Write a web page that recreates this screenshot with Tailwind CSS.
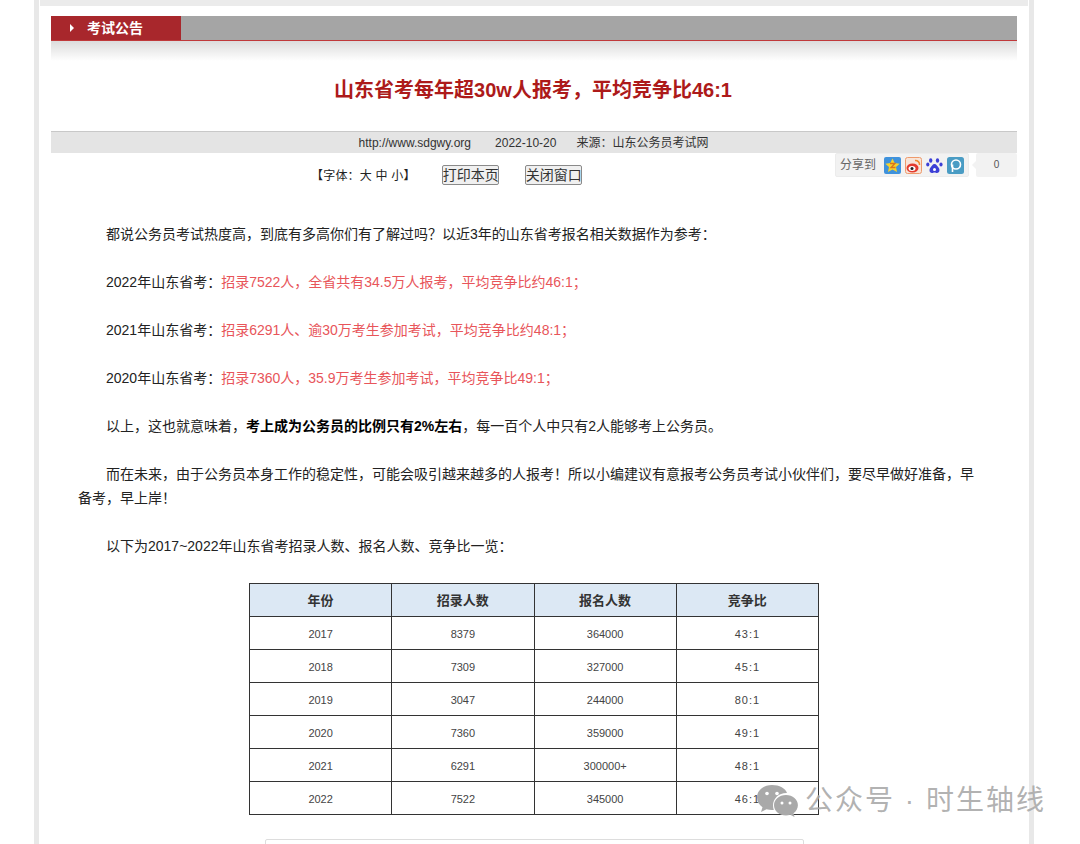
<!DOCTYPE html>
<html lang="zh-CN">
<head>
<meta charset="UTF-8">
<title>山东省考每年超30w人报考，平均竞争比46:1</title>
<script src="https://cdn.jsdelivr.net/npm/@tailwindcss/browser@4"></script>
</head>
<body class="bg-white h-[844px] overflow-hidden relative font-['Liberation_Sans','Noto_Sans_CJK_SC',sans-serif]">
<!-- page frame -->
<div class="ml-[34px] w-[1000px] h-[844px] border-x-[5px] border-[#e8e8e8] px-[1px] overflow-hidden">
  <div class="h-[6px] bg-[#ebebeb]"></div>
  <div class="px-[11px] pt-[10px]">
    <!-- section header -->
    <div class="flex h-[25px] bg-[#a5a5a5] border-b border-[#c0393b]">
      <div class="w-[130px] bg-[#a8272c] flex items-center pl-[19px] text-white text-[14px] font-bold">
        <span class="w-0 h-0 border-y-[4px] border-y-transparent border-l-[4px] border-l-white mr-[13px]"></span>
        考试公告
      </div>
    </div>
    <div class="h-[20px] bg-gradient-to-b from-[#dcdcdc] to-white"></div>
    <h1 class="h-[70px] pt-[9px] pr-[2px] text-center text-[#ad1a1a] text-[20px] leading-[40px] font-bold">山东省考每年超30w人报考，平均竞争比46:1</h1>
    <!-- source bar -->
    <div class="h-[22px] bg-[#e4e4e4] border-t border-[#c8c8c8] flex items-center justify-center text-[12px] text-[#333] pr-[1px]">
      <span>http://www.sdgwy.org</span>
      <span class="ml-[24px]">2022-10-20</span>
      <span class="ml-[20px]">来源：山东公务员考试网</span>
    </div>
    <!-- tools row -->
    <div class="relative h-[36px] flex items-center text-[12px] text-[#222]">
      <span class="ml-[260px] mt-[10px] tracking-[0.2px]">【字体：大 中 小】</span>
      <button class="ml-[26px] mt-[7px] w-[57px] h-[20px] border border-[#8a8a8a] rounded-[2px] bg-[#f0f0f0] text-[14px] leading-[18px] text-[#333] whitespace-nowrap overflow-hidden">打印本页</button>
      <button class="ml-[26px] mt-[7px] w-[57px] h-[20px] border border-[#8a8a8a] rounded-[2px] bg-[#f0f0f0] text-[14px] leading-[18px] text-[#333] whitespace-nowrap overflow-hidden">关闭窗口</button>
      <!-- share widget -->
      <div class="absolute right-0 top-0 flex items-start">
        <div class="w-[134px] h-[24px] bg-[#f2f2f2] border border-[#ececec] rounded-[2px] flex items-center pl-[4px] text-[12px] text-[#666]">
          <span class="mr-[8px]">分享到</span>
          <svg class="mr-[4px]" width="17" height="17" viewBox="0 0 17 17"><rect width="17" height="17" rx="2" fill="#3f92dc"/><path d="M8.5 1.5l2.2 4.6 5 .6-3.7 3.4 1 5-4.5-2.5L4 15.100l1-5L1.300 6.700l5-.6z" fill="#f6d22c"/><path d="M6 6.500h5L7 10.500h4.500" stroke="#d9731c" stroke-width="1.300" fill="none"/></svg>
          <svg class="mr-[4px]" width="17" height="17" viewBox="0 0 17 17"><rect x=".5" y=".5" width="16" height="16" rx="2" fill="#f8e4d8" stroke="#ee9a6c"/><ellipse cx="7.500" cy="11" rx="6" ry="4.500" fill="#e33b2e"/><ellipse cx="7" cy="11.500" rx="3.500" ry="2.500" fill="#fff"/><circle cx="7" cy="11.500" r="1.500" fill="#222"/><path d="M10 3.500a4 4 0 0 1 4.500 4.500" stroke="#ef8a2c" stroke-width="1.500" fill="none"/></svg>
          <svg class="mr-[4px]" width="17" height="17" viewBox="0 0 17 17" fill="#3c3fd6"><ellipse cx="4.700" cy="3.500" rx="1.700" ry="2.300"/><ellipse cx="11.500" cy="3.500" rx="1.700" ry="2.300"/><ellipse cx="1.800" cy="7.500" rx="1.600" ry="2"/><ellipse cx="15" cy="7.500" rx="1.600" ry="2"/><path d="M8.500 7c-2 0-2.500 2-4 3.500S3 16 6 16c1 0 1.500-.5 2.500-.5s1.500.5 2.500.5c3 0 3-4 1.500-5.500S10.500 7 8.500 7z"/><circle cx="8.500" cy="12.500" r="1.500" fill="#fff"/></svg>
          <svg width="17" height="17" viewBox="0 0 17 17"><rect width="17" height="17" rx="2.500" fill="#4a9cc4"/><circle cx="9" cy="7.500" r="4.500" fill="none" stroke="#fff" stroke-width="1.600"/><path d="M5.500 7.500V15" stroke="#fff" stroke-width="1.600"/></svg>
        </div>
        <div class="ml-[7px] relative w-[41px] h-[24px] bg-[#f2f2f2] rounded-[2px] text-center text-[10px] leading-[24px] text-[#555]">
          <span class="absolute -left-[4px] top-[8px] w-0 h-0 border-y-[4px] border-y-transparent border-r-[4px] border-r-[#f2f2f2]"></span>
          0
        </div>
      </div>
    </div>
    <!-- article -->
    <div class="mt-[33px] pl-[27px] pr-[38px] text-[14px] leading-[24px] text-[#222] flex flex-col gap-[24px]">
      <p class="indent-[28px]">都说公务员考试热度高，到底有多高你们有了解过吗？以近3年的山东省考报名相关数据作为参考：</p>
      <p class="indent-[28px]">2022年山东省考：<span class="text-[#e8555a]">招录7522人，全省共有34.5万人报考，平均竞争比约46:1；</span></p>
      <p class="indent-[28px]">2021年山东省考：<span class="text-[#e8555a]">招录6291人、逾30万考生参加考试，平均竞争比约48:1；</span></p>
      <p class="indent-[28px]">2020年山东省考：<span class="text-[#e8555a]">招录7360人，35.9万考生参加考试，平均竞争比49:1；</span></p>
      <p class="indent-[28px]">以上，这也就意味着，<b class="text-black">考上成为公务员的比例只有2%左右</b>，每一百个人中只有2人能够考上公务员。</p>
      <p class="indent-[28px]">而在未来，由于公务员本身工作的稳定性，可能会吸引越来越多的人报考！所以小编建议有意报考公务员考试小伙伴们，要尽早做好准备，早备考，早上岸！</p>
      <p class="indent-[28px]">以下为2017~2022年山东省考招录人数、报名人数、竞争比一览：</p>
    </div>
    <!-- data table -->
    <table class="mt-[25px] ml-[198px] w-[570px] table-fixed border-collapse border border-[#333] text-center text-[11px] text-[#444]">
      <thead>
        <tr class="h-[33px] bg-[#dce8f4] text-[13px] font-bold text-[#333]">
          <th class="border border-[#333] pt-[2px]">年份</th><th class="border border-[#333] pt-[2px]">招录人数</th><th class="border border-[#333] pt-[2px]">报名人数</th><th class="border border-[#333] pt-[2px]">竞争比</th>
        </tr>
      </thead>
      <tbody class="[&_td]:border [&_td]:border-[#333] [&_td]:pt-[2px]">
        <tr class="h-[33px]"><td>2017</td><td>8379</td><td>364000</td><td class="tracking-[1px]">43:1</td></tr>
        <tr class="h-[33px]"><td>2018</td><td>7309</td><td>327000</td><td class="tracking-[1px]">45:1</td></tr>
        <tr class="h-[33px]"><td>2019</td><td>3047</td><td>244000</td><td class="tracking-[1px]">80:1</td></tr>
        <tr class="h-[33px]"><td>2020</td><td>7360</td><td>359000</td><td class="tracking-[1px]">49:1</td></tr>
        <tr class="h-[33px]"><td>2021</td><td>6291</td><td>300000+</td><td class="tracking-[1px]">48:1</td></tr>
        <tr class="h-[33px]"><td>2022</td><td>7522</td><td>345000</td><td class="tracking-[1px]">46:1</td></tr>
      </tbody>
    </table>
    <div class="mt-[24px] ml-[214px] w-[539px] h-[20px] border border-[#ddd] rounded-t-[2px]"></div>
  </div>
</div>
<!-- watermark -->
<div class="absolute left-[756px] top-[783px] flex items-center text-[#a8a8a8]/90">
  <svg width="42" height="36" viewBox="0 0 42 36" fill="#a9a9a9">
    <path d="M16 2C7.500 2 1 7.500 1 14.500c0 4 2.200 7.500 5.500 9.800L5 29l5.500-2.700c1.800.5 3.600.7 5.500.7.600 0 1.200 0 1.800-.1-.5-1.400-.8-2.900-.8-4.400C17 15 23.500 9.600 31 10 29.500 5.400 23.500 2 16 2z"/>
    <path d="M30 12c-6.800 0-12 4.500-12 10.200S23.200 32.500 30 32.500c1.500 0 2.800-.2 4.200-.7L38.500 34l-1-3.700c2.600-2 4.400-4.900 4.400-8.100C41.900 16.500 36.700 12 30 12z"/>
    <circle cx="11" cy="10.500" r="1.800" fill="#fff"/><circle cx="21" cy="10.500" r="1.800" fill="#fff"/>
    <circle cx="26" cy="20" r="1.500" fill="#fff"/><circle cx="34" cy="20" r="1.500" fill="#fff"/>
  </svg>
  <span class="ml-[7px] text-[28px] leading-[36px] tracking-[2px] whitespace-nowrap">公众号 · 时生轴线</span>
</div>
</body>
</html>
